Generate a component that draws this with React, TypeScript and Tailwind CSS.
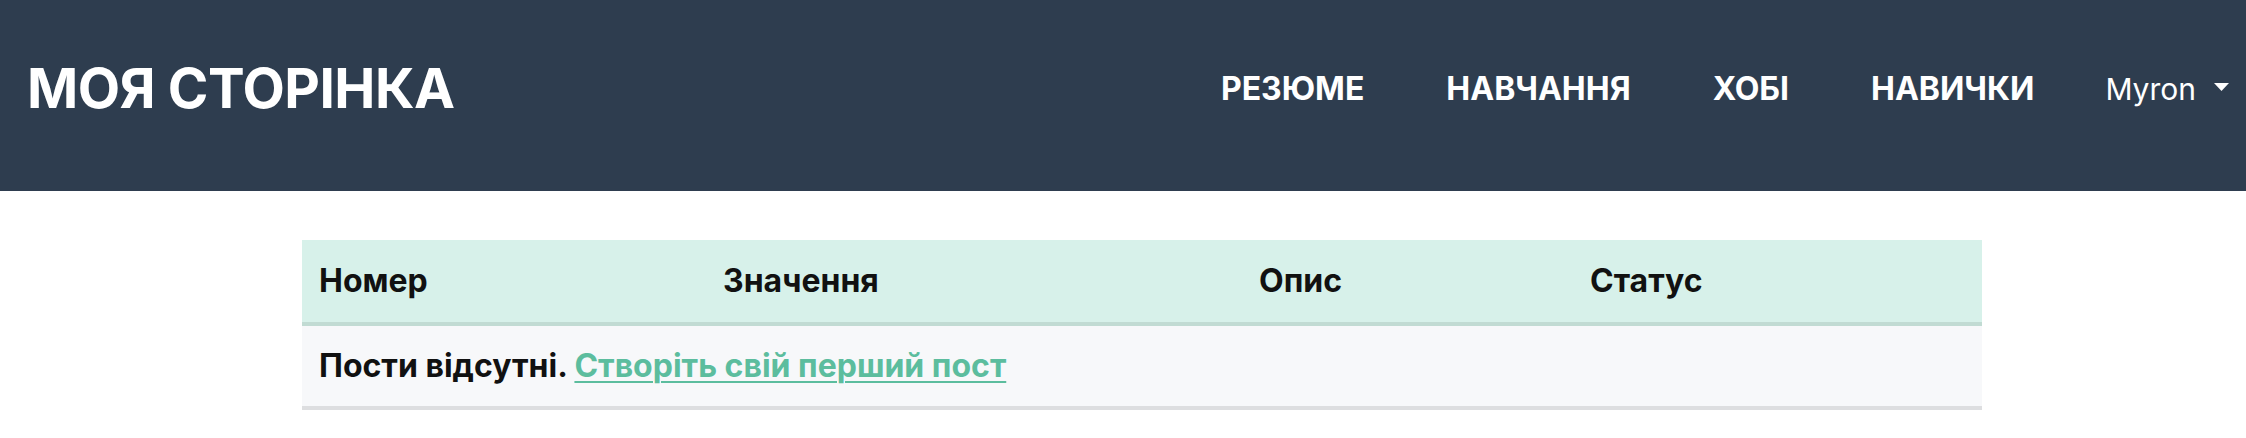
import React from "react";

const navLinks = ["РЕЗЮМЕ", "НАВЧАННЯ", "ХОБІ", "НАВИЧКИ"];

function Navbar() {
  return (
    <header className="flex h-[191px] items-center justify-between bg-[#2e3d4f] pb-[14px] pl-[27px] pr-[17px] text-white">
      <a href="#" className="text-[55px] font-bold leading-none tracking-[-0.5px]">
        МОЯ СТОРІНКА
      </a>
      <nav className="flex items-center gap-[82px]">
        {navLinks.map((link) => (
          <a key={link} href="#" className="text-[32px] font-bold leading-none">
            {link}
          </a>
        ))}
        {/* user dropdown */}
        <button className="-ml-[11px] flex items-center gap-[18px] text-[30px] leading-none">
          Myron
          <svg width="15" height="8" viewBox="0 0 15 8" className="mt-[-4px]">
            <path d="M0 0h15L7.5 8z" fill="currentColor" />
          </svg>
        </button>
      </nav>
    </header>
  );
}

function PostsTable() {
  return (
    <table className="ml-[302px] mt-[49px] w-[1680px] table-fixed border-collapse text-left text-[32px] text-[#111]">
      <colgroup>
        <col className="w-[404px]" />
        <col className="w-[536px]" />
        <col className="w-[331px]" />
        <col />
      </colgroup>
      <thead>
        <tr className="h-[84px] border-b-4 border-[#c1dbd3] bg-[#d7f1ea]">
          <th className="px-[17px] font-bold">Номер</th>
          <th className="px-[17px] font-bold">Значення</th>
          <th className="px-[17px] font-bold">Опис</th>
          <th className="px-[17px] font-bold">Статус</th>
        </tr>
      </thead>
      <tbody>
        <tr className="h-[84px] border-b-4 border-[#dddee0] bg-[#f7f8fa]">
          <td colSpan={4} className="px-[17px] font-bold">
            Пости відсутні.{" "}
            <a
              href="#"
              className="text-[#5cbd9e] underline decoration-2 underline-offset-[4px]"
            >
              Створіть свій перший пост
            </a>
          </td>
        </tr>
      </tbody>
    </table>
  );
}

export default function App() {
  return (
    <div className="min-h-[438px] bg-white font-['Inter',sans-serif]">
      <Navbar />
      <PostsTable />
    </div>
  );
}
